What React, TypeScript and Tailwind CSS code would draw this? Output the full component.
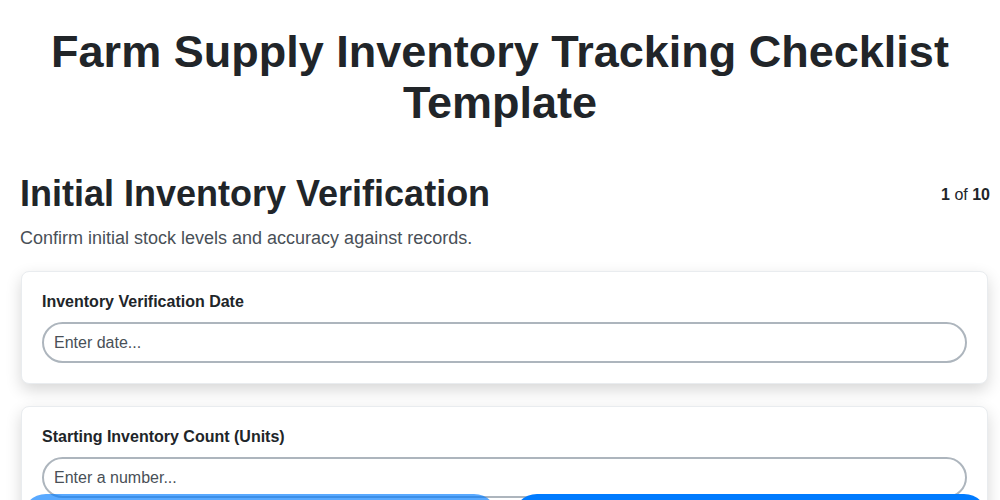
import { useState } from "react";

const fields = [
  { label: "Inventory Verification Date", placeholder: "Enter date...", type: "text" },
  { label: "Starting Inventory Count (Units)", placeholder: "Enter a number...", type: "text" },
  { label: "Discrepancies Noted", placeholder: "Enter details...", type: "text" },
];

export default function App() {
  const [values, setValues] = useState<Record<string, string>>({});

  return (
    <div className="min-h-screen bg-white font-['Liberation_Sans',Arial,sans-serif] text-[#212529]">
      <div className="px-5 pt-[26px] pb-24">
        <h1 className="text-center text-[45px] font-bold leading-[51px]">
          Farm Supply Inventory Tracking Checklist Template
        </h1>

        <div className="mr-[-10px] mt-[45px] flex items-start justify-between">
          <h2 className="text-[36px] font-bold leading-[42px]">Initial Inventory Verification</h2>
          <div className="pt-[10px] text-[16px]">
            <span className="font-bold">1</span> of <span className="font-bold">10</span>
          </div>
        </div>
        <p className="mt-[11px] text-[18px] leading-6 text-[#495057]">
          Confirm initial stock levels and accuracy against records.
        </p>

        <div className="mr-[-8px] mt-[21px] flex flex-col gap-[22px] pl-px">
          {fields.map((f) => (
            <div
              key={f.label}
              className="rounded-lg border border-[#e9ecef] bg-white p-5 shadow-[0_6px_16px_rgba(0,0,0,0.16)]"
            >
              <label className="block text-[16px] font-bold leading-5">{f.label}</label>
              <input
                type={f.type}
                placeholder={f.placeholder}
                value={values[f.label] ?? ""}
                onChange={(e) => setValues({ ...values, [f.label]: e.target.value })}
                className="mt-[10px] h-[41px] w-full rounded-full border-2 border-[#adb5bd] bg-white px-[10px] text-[16px] text-[#212529] outline-none placeholder:text-[#495057]"
              />
            </div>
          ))}
        </div>
      </div>

      <div className="fixed inset-x-0 bottom-[-42px] flex gap-[15px] pl-[22px] pr-[12px]">
        <button
          disabled
          className="h-12 flex-1 rounded-full bg-[#007bff] text-[16px] font-bold text-white opacity-65"
        >
          Previous
        </button>
        <button className="h-12 flex-1 rounded-full bg-[#007bff] text-[16px] font-bold text-white">
          Next
        </button>
      </div>
    </div>
  );
}
